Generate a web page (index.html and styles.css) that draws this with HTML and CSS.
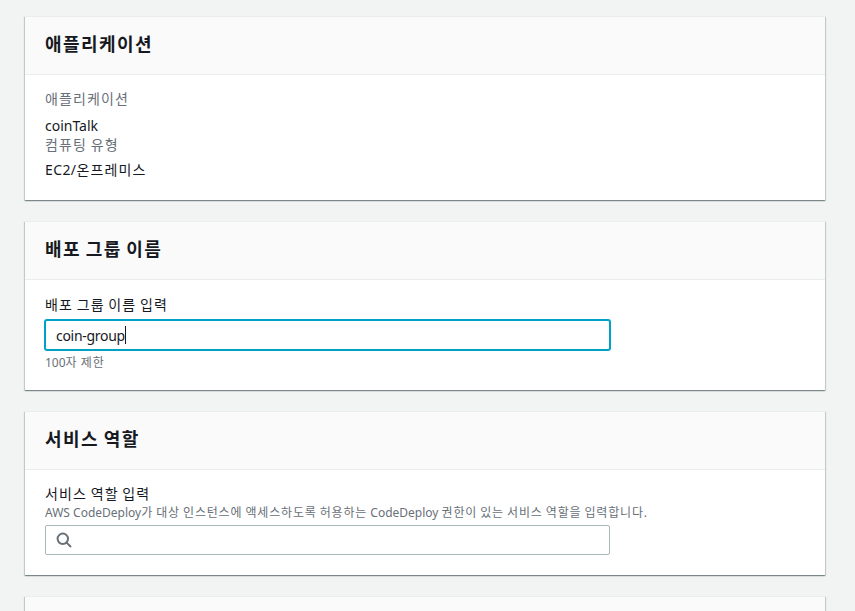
FILE: index.html
```html
<!DOCTYPE html>
<html lang="ko">
<head>
<meta charset="utf-8">
<title>배포 그룹 생성</title>
<link rel="stylesheet" href="styles.css">
</head>
<body>
<main class="page">
  <section class="card">
    <header class="card-head"><h2>애플리케이션</h2></header>
    <div class="card-body body-app">
      <div class="meta-label">애플리케이션</div>
      <div class="meta-value"><span class="en">coinTalk</span></div>
      <div class="meta-label">컴퓨팅 유형</div>
      <div class="meta-value meta-value-last"><span class="en en-wide">EC2/</span>온프레미스</div>
    </div>
  </section>
  <section class="card">
    <header class="card-head"><h2>배포 그룹 이름</h2></header>
    <div class="card-body body-group">
      <label class="field-label">배포 그룹 이름 입력</label>
      <div class="input input-focus"><span class="typed">coin-group</span><span class="caret"></span></div>
      <div class="hint"><span class="en">100</span>자 제한</div>
    </div>
  </section>
  <section class="card">
    <header class="card-head"><h2>서비스 역할</h2></header>
    <div class="card-body body-role">
      <label class="field-label">서비스 역할 입력</label>
      <div class="desc"><span class="en">AWS CodeDeploy</span>가 대상 인스턴스에 액세스하도록 허용하는 <span class="en">CodeDeploy</span> 권한이 있는 서비스 역할을 입력합니다.</div>
      <div class="input input-search">
        <svg class="search" width="16" height="16" viewBox="0 0 16 16" aria-hidden="true"><circle cx="6.8" cy="6.8" r="5.2" fill="none" stroke="#687078" stroke-width="2"/><path d="M10.6 10.6 15 15" fill="none" stroke="#687078" stroke-width="2"/></svg>
      </div>
    </div>
  </section>
  <section class="card card-last"></section>
</main>
</body>
</html>
```
FILE: styles.css
```css
html, body {
  margin: 0;
  height: 100%;
  overflow: hidden;
}
body {
  background: #f2f3f3;
  color: #16191f;
  font-family: "Noto Sans", "Noto Sans CJK KR", sans-serif;
  font-size: 14px;
  letter-spacing: 1.12px;
  word-spacing: -1.12px;
}
.en {
  letter-spacing: 0;
  word-spacing: 0;
}
.en-wide {
  letter-spacing: 0.4px;
}
.page {
  width: 800px;
  margin-left: 25px;
  padding-top: 16px;
  display: flex;
  flex-direction: column;
  gap: 21px;
}
.card {
  background: #fff;
  border-top: 1px solid #eaeded;
  box-shadow: 0 1px 1px 0 rgba(0, 28, 36, 0.3), 1px 1px 1px 0 rgba(0, 28, 36, 0.15), -1px 1px 1px 0 rgba(0, 28, 36, 0.15);
}
.card-head {
  box-sizing: border-box;
  height: 58px;
  background: #fafafa;
  border-bottom: 1px solid #eaeded;
  padding: 0 20px 3px;
  display: flex;
  align-items: center;
}
.card-head h2 {
  margin: 0;
  font-size: 18px;
  line-height: 24px;
  font-weight: 700;
  letter-spacing: 1.44px;
  word-spacing: -1.44px;
}
.card-body {
  box-sizing: border-box;
  padding: 0 20px;
}
.body-app { height: 125px; padding-top: 13px; }
.body-group { height: 110px; padding-top: 15px; }
.body-role { height: 105px; padding-top: 14px; }
.meta-label { color: #687078; line-height: 22px; }
.meta-value { line-height: 22px; margin-top: 5px; }
.meta-value + .meta-label { margin-top: -3px; }
.meta-value-last { margin-top: 3px; }
.field-label { display: block; line-height: 20px; }
.input {
  box-sizing: border-box;
  width: 565px;
  height: 30px;
  border: 1px solid #aab7b8;
  border-radius: 2px;
  display: flex;
  align-items: center;
  background: #fff;
}
.input-focus {
  margin-top: 5px;
  border-color: #00a1c9;
  box-shadow: 0 0 0 1px #00a1c9;
  padding-left: 10px;
}
.typed {
  letter-spacing: -0.3px;
}
.caret { display: block; width: 1px; height: 18px; background: #16191f; }
.input-search { margin-top: 4px; padding-left: 10px; }
.search { display: block; }
.hint {
  color: #687078;
  font-size: 12px;
  line-height: 18px;
  margin-top: 4px;
  letter-spacing: 0.96px;
  word-spacing: -0.96px;
}
.desc {
  color: #687078;
  font-size: 12px;
  line-height: 16px;
  margin-top: 1px;
  letter-spacing: 0.82px;
  word-spacing: -0.82px;
}
.card-last {
  height: 14px;
  background: #fafafa;
}
```
